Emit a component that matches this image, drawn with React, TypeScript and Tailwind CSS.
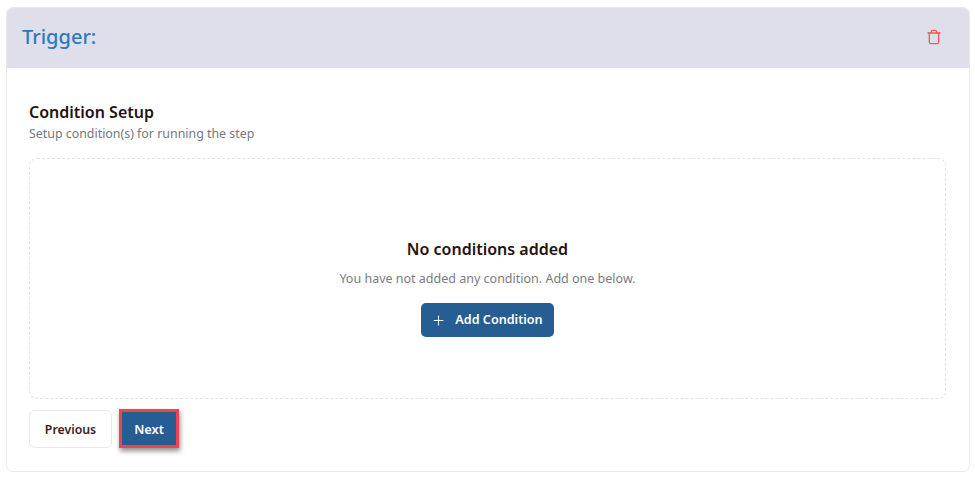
import { Plus, Trash } from "lucide-react";

export default function App() {
  return (
    <div className="h-[479px] w-[975px] bg-white px-[6px] pt-[7px] font-['Noto_Sans',sans-serif]">
      <div className="flex h-[465px] w-[964px] flex-col overflow-hidden rounded-[7px] border border-[#e9e9ec] bg-white">
        <div className="flex h-[60px] items-center justify-between bg-[#dfdfeb] pb-[2px] pl-[15px] pr-[27px]">
          <h1 className="text-[20px] font-medium leading-[28px] text-[#2f7abd]">Trigger:</h1>
          <Trash className="h-[16px] w-[16px] text-[#e85c5c]" strokeWidth={2} />
        </div>
        <div className="flex flex-1 flex-col px-[22px] pt-[33px]">
          <h2 className="text-[16px] font-semibold leading-[22px] text-[#26120f]">Condition Setup</h2>
          <p className="mt-[2px] text-[12.4px] leading-[18px] text-[#77777f]">Setup condition(s) for running the step</p>
          <div className="mt-[15px] flex h-[241px] w-[917px] flex-col items-center rounded-[8px] border border-dashed border-[#e3e3e6] pt-[78px]">
            <h3 className="text-[16px] font-semibold leading-[24px] text-[#26120f]">No conditions added</h3>
            <p className="mt-[8px] text-[12.5px] leading-[20px] text-[#7b7b83]">You have not added any condition. Add one below.</p>
            <button className="mt-[14px] flex h-[34px] w-[133px] items-center justify-center gap-[9px] rounded-[5px] bg-[#265e93] pr-[1px] pt-[1px] text-[12.6px] font-semibold text-white">
              <Plus className="h-[15px] w-[15px]" strokeWidth={1.75} />
              Add Condition
            </button>
          </div>
          <div className="mt-[10px] flex items-center gap-[7px]">
            <button className="h-[38px] w-[83px] rounded-[6px] border border-[#e8e8ea] bg-white pt-[3px] text-[12.3px] font-semibold text-[#3a1f1c]">Previous</button>
            <button className="h-[39px] w-[60px] border-[3px] border-[#f0434a] bg-[#265e93] pt-[2px] text-[12.8px] font-semibold text-white shadow-[1px_3px_5px_rgba(0,0,0,0.45)]">Next</button>
          </div>
        </div>
      </div>
    </div>
  );
}
